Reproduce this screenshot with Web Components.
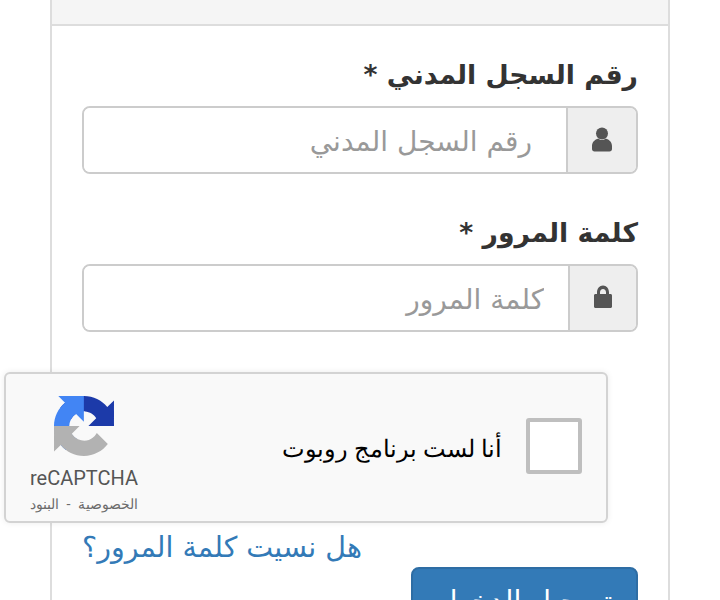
<!DOCTYPE html>
<html lang="ar" dir="rtl">
<head>
<meta charset="utf-8">
<title>تسجيل الدخول</title>
<style>
    html, body { margin: 0; height: 600px; overflow: hidden; background: #fff; }
    body { font-family: "DejaVu Sans", sans-serif; color: #333; }
</style>
</head>
<body>

<template id="login-panel-template">
    <style>
        :host {
            display: block;
            box-sizing: border-box;
            width: 620px;
            height: 700px;
            margin-right: 50px;
            border: solid #ddd;
            border-width: 0 2px;
        }
        .heading {
            height: 24px;
            background: #f5f5f5;
            border-bottom: 2px solid #ddd;
        }
        .body {
            display: flex;
            flex-direction: column;
            padding: 30px 30px 0;
        }
    </style>
    <div class="heading"></div>
    <div class="body"><slot></slot></div>
</template>

<template id="form-field-template">
    <style>
        :host {
            display: block;
            margin-bottom: 40px;
        }
        label {
            display: block;
            height: 50px;
            font-weight: bold;
            font-size: 26.7px;
            line-height: 38px;
            color: #333;
        }
        .group {
            display: flex;
            height: 68px;
            box-sizing: border-box;
            border: 2px solid #ccc;
            border-radius: 8px;
            overflow: hidden;
        }
        .addon {
            display: flex;
            align-items: center;
            padding: 0 24px;
            background: #eee;
            border-left: 2px solid #ccc;
        }
        input {
            flex: 1;
            min-width: 0;
            border: 0;
            outline: 0;
            padding: 2px var(--input-indent, 24px) 0 24px;
            font: 28px "DejaVu Sans", sans-serif;
            color: #555;
            background: #fff;
        }
        input::placeholder { color: #999; opacity: 1; }
        ::slotted(svg) { display: block; fill: #555; }
    </style>
    <label></label>
    <div class="group">
        <span class="addon"><slot></slot></span>
        <input type="text">
    </div>
</template>

<template id="re-captcha-template">
    <style>
        :host {
            display: flex;
            align-self: flex-end;
            box-sizing: border-box;
            width: 604px;
            height: 151px;
            margin: 0 0 6px -78px;
            background: #f9f9f9;
            border: 2px solid #d3d3d3;
            border-radius: 6px;
            box-shadow: 0 0 6px rgba(0, 0, 0, .08);
            font-family: Roboto, "Noto Sans", sans-serif;
        }
        .check {
            display: flex;
            align-items: center;
            flex: 1;
            padding: 2px 24px 0 0;
            gap: 24px;
            font-size: 24px;
            color: #000;
        }
        .box {
            box-sizing: border-box;
            width: 56px;
            height: 56px;
            margin-bottom: 6px;
            background: #fff;
            border: 4px solid #bfbfbf;
            border-radius: 3px;
        }
        .brand {
            display: flex;
            flex-direction: column;
            align-items: center;
            width: 156px;
            padding-top: 22px;
            box-sizing: border-box;
            color: #555;
        }
        svg { display: block; width: 60px; height: 60px; }
        .name { font-size: 20px; line-height: 24px; margin-top: 10px; }
        .terms { font-size: 14.3px; word-spacing: 4px; line-height: 18px; margin-top: 5px; color: #6b6b6b; white-space: nowrap; }
    </style>
    <div class="check">
        <span class="box"></span>
        <span>أنا لست برنامج روبوت</span>
    </div>
    <div class="brand">
        <svg viewBox="0 0 64 64">
            <path d="M64 31.955l-.033-1.37V4.687l-7.16 7.16C50.948 4.674 42.033.093 32.05.093c-10.4 0-19.622 4.96-25.458 12.64l11.736 11.86a15.55 15.55 0 0 1 4.754-5.334c2.05-1.6 4.952-2.906 8.968-2.906.485 0 .86.057 1.135.163 4.976.393 9.288 3.14 11.828 7.124l-8.307 8.307L64 31.953" fill="#1c3aa9"/>
            <path d="M31.862.094l-1.37.033H4.594l7.16 7.16C4.58 13.147 0 22.06 0 32.046c0 10.4 4.96 19.622 12.64 25.458L24.5 45.768a15.55 15.55 0 0 1-5.334-4.754c-1.6-2.05-2.906-4.952-2.906-8.968 0-.485.057-.86.163-1.135.393-4.976 3.14-9.288 7.124-11.828l8.307 8.307L31.86.094" fill="#4285f4"/>
            <path d="M.001 32.045l.033 1.37v25.898l7.16-7.16c5.86 7.173 14.774 11.754 24.76 11.754 10.4 0 19.622-4.96 25.458-12.64l-11.736-11.86a15.55 15.55 0 0 1-4.754 5.334c-2.05 1.6-4.952 2.906-8.968 2.906-.485 0-.86-.057-1.135-.163-4.976-.393-9.288-3.14-11.828-7.124l8.307-8.307-27.295.001" fill="#b2b2b2"/>
        </svg>
        <div class="name">reCAPTCHA</div>
        <div class="terms">الخصوصية - البنود</div>
    </div>
</template>

<template id="login-actions-template">
    <style>
        :host {
            display: flex;
            flex-direction: column;
        }
        a {
            align-self: flex-end;
            height: 38px;
            font-size: 28.5px;
            line-height: 38px;
            color: #337ab7;
            text-decoration: none;
        }
        button {
            align-self: flex-start;
            width: 227px;
            height: 68px;
            border: 2px solid #2e6da4;
            border-radius: 8px;
            background: #337ab7;
            color: #fff;
            font: 28.5px "DejaVu Sans", sans-serif;
            padding: 0;
        }
    </style>
    <a href="#"><slot name="link"></slot></a>
    <button type="button"><slot name="button"></slot></button>
</template>

<login-panel>
    <form-field label="رقم السجل المدني *" placeholder="رقم السجل المدني" style="--input-indent: 34px">
        <svg width="20" height="25" viewBox="0 0 20 25" style="margin-bottom: 2px"><circle cx="10" cy="6.500" r="6"/><path d="M6.500 11.500C2.500 12.500 0 15.500 0 19v3c0 1.500 1 2.500 2.500 2.500h15c1.500 0 2.500-1 2.500-2.500v-3c0-3.500-2.500-6.500-6.500-7.500-1 1-2.200 1.500-3.500 1.500s-2.500-.5-3.500-1.500z"/></svg>
    </form-field>
    <form-field label="كلمة المرور *" placeholder="كلمة المرور" style="--input-indent: 24px">
        <svg width="18" height="23" viewBox="0 0 18 23" style="margin-bottom: 4px"><path d="M3 9V7.500C3 3.500 5.500 0.500 9 0.500s6 3 6 7V9h1.500c.9 0 1.500.6 1.500 1.500v11c0 .9-.6 1.500-1.500 1.500h-15C.6 23 0 22.400 0 21.500v-11C0 9.600.6 9 1.500 9H3zm3 0h6V7.500C12 5.500 10.800 4 9 4S6 5.500 6 7.500V9z"/></svg>
    </form-field>
    <re-captcha></re-captcha>
    <login-actions>
        <span slot="link">هل نسيت كلمة المرور؟</span>
        <span slot="button">تسجيل الدخول</span>
    </login-actions>
</login-panel>

<script>
function shadowFrom(el, id) {
    el.attachShadow({ mode: 'open' })
    .appendChild(document.getElementById(id).content.cloneNode(true));
}

class LoginPanel extends HTMLElement {
    constructor() {
        super();
        shadowFrom(this, 'login-panel-template');
    }
}

class FormField extends HTMLElement {
    constructor() {
        super();
        shadowFrom(this, 'form-field-template');
    }

    connectedCallback() {
        this.shadowRoot.querySelector('label').textContent = this.getAttribute('label');
        this.shadowRoot.querySelector('input').placeholder = this.getAttribute('placeholder');
    }
}

class ReCaptcha extends HTMLElement {
    constructor() {
        super();
        shadowFrom(this, 're-captcha-template');
    }
}

class LoginActions extends HTMLElement {
    constructor() {
        super();
        shadowFrom(this, 'login-actions-template');
    }
}

customElements.define('login-panel', LoginPanel);
customElements.define('form-field', FormField);
customElements.define('re-captcha', ReCaptcha);
customElements.define('login-actions', LoginActions);
</script>
</body>
</html>
